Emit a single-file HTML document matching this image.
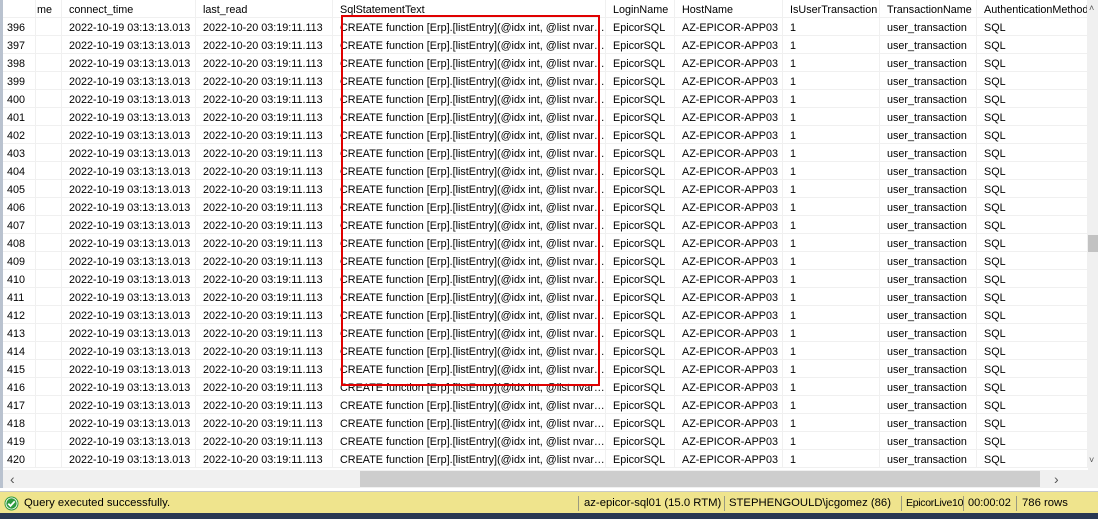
<!DOCTYPE html><html><head><meta charset="utf-8"><style>
*{margin:0;padding:0;box-sizing:border-box}
body{width:1098px;height:519px;overflow:hidden;background:#fff;font-family:"Liberation Sans",sans-serif;font-size:10.8px;color:#000;position:relative}
.lb{position:absolute;left:0;top:0;width:3px;height:491px;background:#b9c2cf}
.row{position:absolute;left:3px;width:1085px;height:18px;border-bottom:1px solid #f0f0f0}
.c{position:absolute;top:0;height:18px;line-height:21px;white-space:nowrap;overflow:hidden;text-overflow:ellipsis;border-right:1px solid #f0f0f0;padding-left:7px}
.vs{position:absolute;left:1088px;top:0;width:10px;height:470px;background:#f0f0f0}
.hs{position:absolute;left:3px;top:470px;width:1095px;height:18px;background:#f0f0f0}
.status{position:absolute;left:0;top:491px;width:1098px;height:22px;background:#efe48d;border-top:1px solid #c8c8c8}
.status span{position:absolute;top:5px;font-size:11.3px;white-space:nowrap}
.sep{position:absolute;top:4px;width:1px;height:15px;background:#9a9a80}
</style></head><body>
<div class="lb"></div>
<div id="g"></div>
<div style="position:absolute;left:341px;top:15px;width:259px;height:371px;border:2px solid #e00000"></div>
<div class="vs"><div style="position:absolute;left:0;top:235px;width:10px;height:17px;background:#c2c2c2"></div><div style="position:absolute;left:1px;top:3px;font-size:9px;color:#555">˄</div><div style="position:absolute;left:1px;top:455px;font-size:9px;color:#555">˅</div></div>
<div class="hs"><div style="position:absolute;left:7px;top:0;font-size:14px;color:#555;line-height:18px">‹</div><div style="position:absolute;left:357px;top:1px;width:680px;height:16px;background:#cdcdcd"></div><div style="position:absolute;left:1051px;top:0;font-size:14px;color:#555;line-height:18px">›</div></div>
<div style="position:absolute;left:0;top:488px;width:1098px;height:3px;background:#fff"></div>
<div class="status">
<svg style="position:absolute;left:4px;top:4px" width="15" height="15" viewBox="0 0 15 15"><circle cx="7.5" cy="7.5" r="7" fill="#2e9a3e"/><circle cx="7.5" cy="7.5" r="5.6" fill="none" stroke="#fff" stroke-width="0.8"/><path d="M4.3 7.6l2.2 2.3 4.2-4.6" stroke="#fff" stroke-width="1.8" fill="none"/></svg>
<span style="left:24px">Query executed successfully.</span>
<div class="sep" style="left:578px"></div><span style="left:584px">az-epicor-sql01 (15.0 RTM)</span>
<div class="sep" style="left:724px"></div><span style="left:729px">STEPHENGOULD\jcgomez (86)</span>
<div class="sep" style="left:901px"></div><span style="left:906px;font-size:10.5px;letter-spacing:-0.3px">EpicorLive10</span>
<div class="sep" style="left:963px"></div><span style="left:968px;font-size:11px">00:00:02</span>
<div class="sep" style="left:1016px"></div><span style="left:1022px">786 rows</span>
</div>
<div style="position:absolute;left:0;top:513px;width:1098px;height:6px;background:#293852"></div>
<script>
var cols=[[3,33],[36,26],[62,134],[196,137],[333,273],[606,69],[675,108],[783,97],[880,97],[977,111]];
var h=['','me','connect_time','last_read','SqlStatementText','LoginName','HostName','IsUserTransaction','TransactionName','AuthenticationMethod'];
var out='';
function row(top,vals,hdr){var s='<div class="row" style="top:'+top+'px">';for(var i=0;i<cols.length;i++){s+='<div class="c" style="left:'+(cols[i][0]-3)+'px;width:'+cols[i][1]+'px;'+(i==0&&!hdr?'padding-left:4px;':'')+(hdr?'text-overflow:clip;':'')+(hdr&&i==1?'padding-left:1px;':'')+'">'+vals[i]+'</div>'}return s+'</div>'}
out+=row(0,h,1);
for(var r=0;r<25;r++){out+=row(18+18*r,[396+r,'','2022-10-19 03:13:13.013','2022-10-20 03:19:11.113','CREATE function [Erp].[listEntry](@idx int, @list nvarc...','EpicorSQL','AZ-EPICOR-APP03','1','user_transaction','SQL'])}
document.getElementById('g').innerHTML=out;
</script>
</body></html>
